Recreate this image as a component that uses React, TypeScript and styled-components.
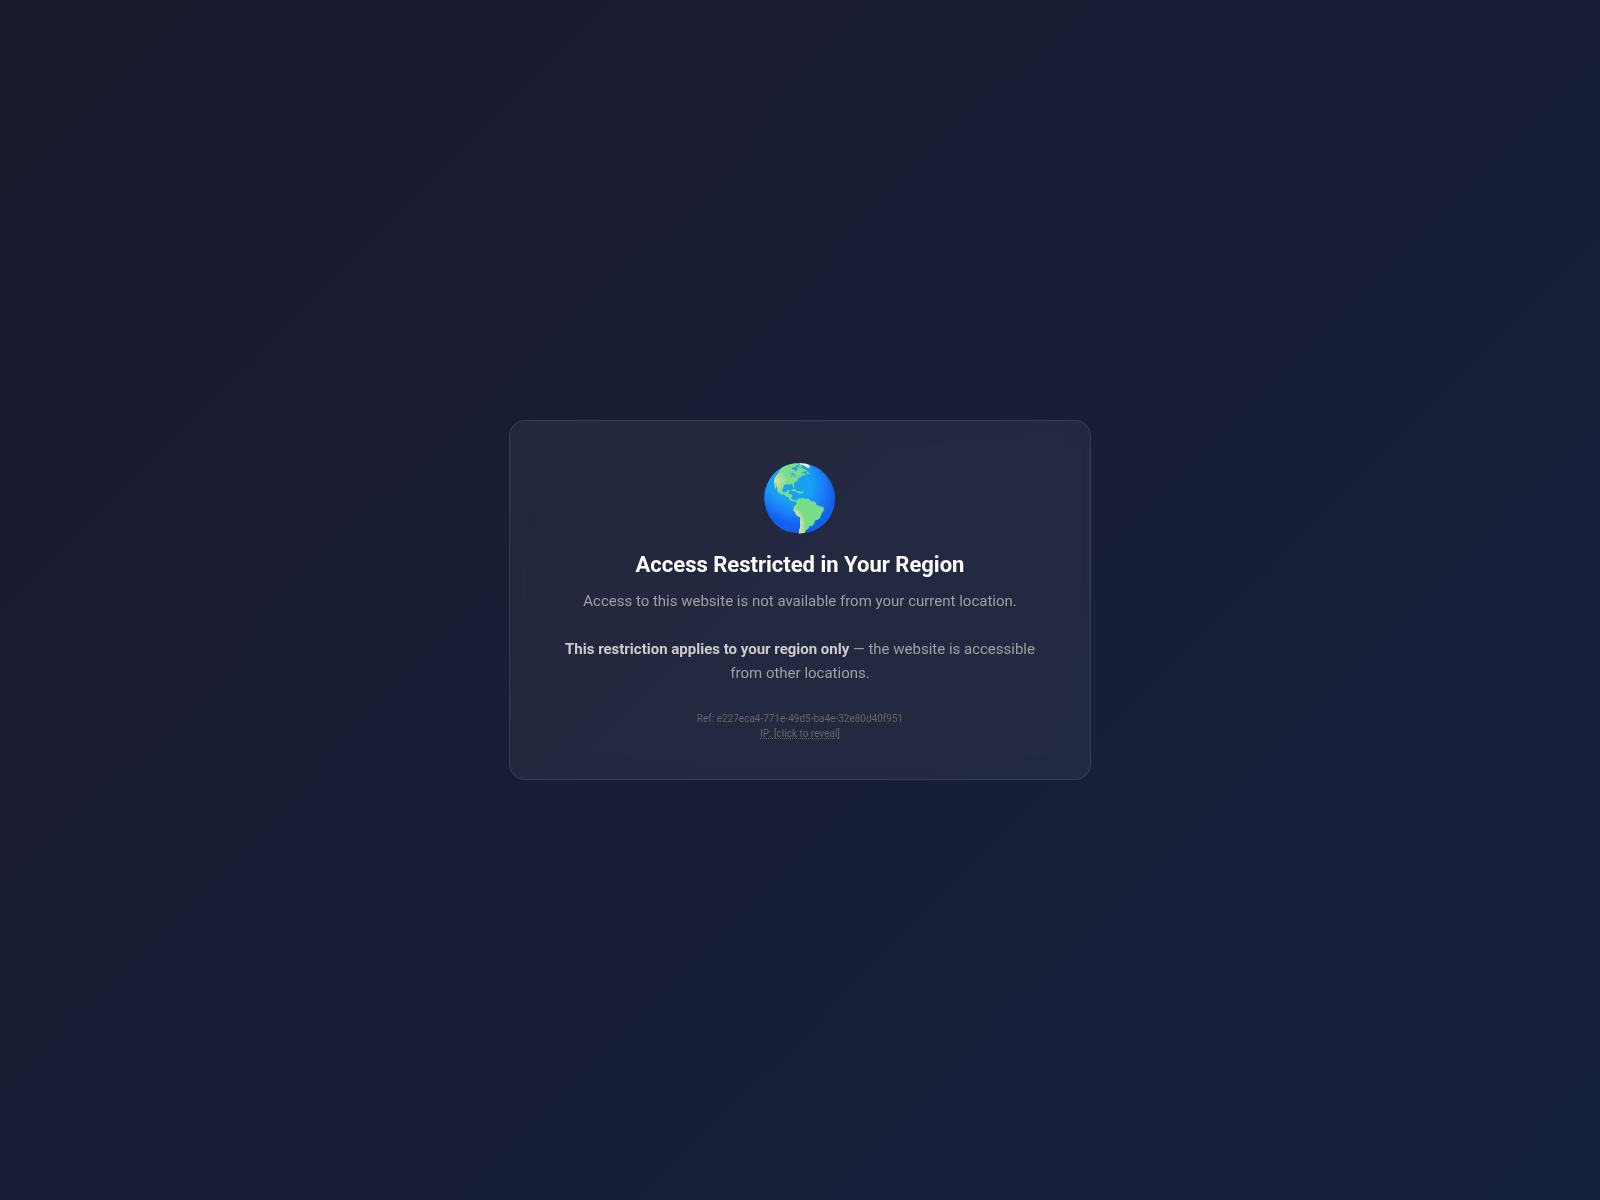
import React, { useState } from "react";
import styled, { createGlobalStyle } from "styled-components";

const GlobalStyle = createGlobalStyle`
  *, *::before, *::after { box-sizing: border-box; margin: 0; padding: 0; }
`;

const Page = styled.main`
  min-height: 100vh;
  display: flex;
  align-items: center;
  justify-content: center;
  padding: 20px;
  color: #fff;
  font-family: Roboto, "Liberation Sans", sans-serif;
  background: linear-gradient(135deg, #1a1a2e 0%, #16213e 100%);
`;

const Card = styled.section`
  width: 100%;
  max-width: 582px;
  padding: 40px 40px 38px;
  text-align: center;
  background: rgba(255, 255, 255, 0.05);
  backdrop-filter: blur(10px);
  border: 1px solid rgba(255, 255, 255, 0.1);
  border-radius: 16px;
`;

const Globe = styled.div`
  margin-bottom: 16px;
  font-size: 64px;
  line-height: 75px;
`;

const Title = styled.h1`
  margin-bottom: 11px;
  font-size: 22px;
  font-weight: 700;
  line-height: 26px;
`;

const Message = styled.p`
  margin-bottom: 24px;
  color: #a0a0a0;
  font-size: 15px;
  line-height: 24px;
`;

const Emphasis = styled.strong`
  color: #ccc;
  font-weight: 700;
`;

const Details = styled.footer`
  display: flex;
  flex-direction: column;
  align-items: center;
  padding-top: 2px;
  color: #666;
  font-size: 10px;
  line-height: 15px;
`;

const Reveal = styled.button`
  color: inherit;
  font: inherit;
  background: none;
  border: 0;
  text-decoration: underline dotted;
  cursor: pointer;
`;

export default function App() {
  const [revealed, setRevealed] = useState(false);
  return (
    <>
      <GlobalStyle />
      <Page>
        <Card>
          <Globe role="img" aria-label="Globe">🌎</Globe>
          <Title>Access Restricted in Your Region</Title>
          <Message>Access to this website is not available from your current location.</Message>
          <Message>
            <Emphasis>This restriction applies to your region only</Emphasis> — the website is accessible from other locations.
          </Message>
          <Details>
            <span>Ref: e227eca4-771e-49d5-ba4e-32e80d40f951</span>
            <Reveal type="button" onClick={() => setRevealed(!revealed)}>
              {revealed ? "IP: unavailable" : "IP: [click to reveal]"}
            </Reveal>
          </Details>
        </Card>
      </Page>
    </>
  );
}
